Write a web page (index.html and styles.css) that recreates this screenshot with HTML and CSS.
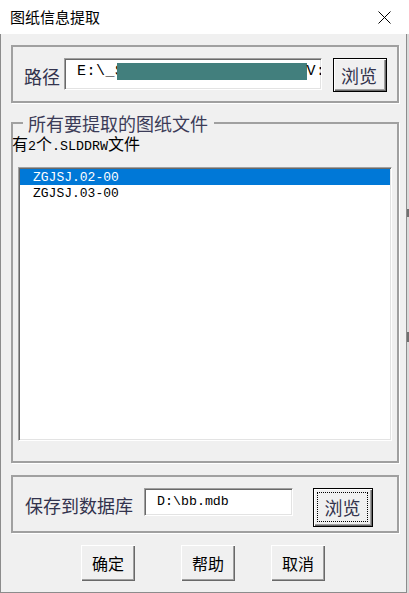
FILE: index.html
```html
<!DOCTYPE html>
<html>
<head>
<meta charset="utf-8">
<link rel="stylesheet" href="styles.css">
</head>
<body>
<div class="win">
  <div class="titlebar">
    <span class="title">图纸信息提取</span>
    <svg class="close" viewBox="0 0 13 13"><path d="M0.5 0.5 L12.5 12.5 M12.5 0.5 L0.5 12.5" stroke="#000" stroke-width="1" fill="none"/></svg>
  </div>
  <div class="client">
    <div class="frame frame-path">
      <span class="lbl lbl-path">路径</span>
      <div class="edit edit-path"><span>E:\_S</span><span class="redact"></span><span>V:</span></div>
      <button class="btn btn-default btn-browse1">浏览</button>
    </div>
    <fieldset class="group">
      <legend>所有要提取的图纸文件</legend>
      <div class="count">有<span class="lat">2</span>个<span class="lat">.SLDDRW</span>文件</div>
      <div class="listbox">
        <div class="item sel">ZGJSJ.02-00</div>
        <div class="item">ZGJSJ.03-00</div>
      </div>
    </fieldset>
    <div class="frame frame-save">
      <span class="lbl lbl-save">保存到数据库</span>
      <div class="edit edit-db">D:\bb.mdb</div>
      <button class="btn btn-default btn-browse2"><span class="focus">浏览</span></button>
    </div>
    <div class="actions">
      <button class="btn btn-act btn-ok">确定</button>
      <button class="btn btn-act btn-help">帮助</button>
      <button class="btn btn-act btn-cancel">取消</button>
    </div>
  </div>
  <span class="mark mark1"></span>
  <span class="mark mark2"></span>
</div>
</body>
</html>
```
FILE: styles.css
```css
body {
  margin: 0;
  background: #fff;
}
.win {
  width: 409px;
  height: 593px;
  background: #dadada;
  position: relative;
  overflow: hidden;
  font-family: "Noto Sans CJK SC", sans-serif;
}
.titlebar {
  height: 34px;
  background: #fff;
  display: flex;
  align-items: center;
  justify-content: space-between;
  padding: 0 18px 0 10px;
  box-sizing: border-box;
}
.title {
  font-size: 15px;
  line-height: 20px;
  color: #000;
}
.close {
  width: 13px;
  height: 13px;
  display: block;
}
.client {
  height: 559px;
  box-sizing: border-box;
  margin-right: 2px;
  background: #f0f0f0;
  border: 1px solid #8c8c8c;
  border-top: none;
  padding: 11px 7px 0 10px;
}
.frame {
  height: 58px;
  box-sizing: border-box;
  border: 2px solid #a0a0a0;
  box-shadow: 1px 1px 0 #fff;
  display: flex;
  align-items: flex-start;
  padding-top: 11px;
}
.frame-path {
  padding-left: 11px;
}
.frame-save {
  margin-top: 12px;
  padding-left: 12px;
}
.lbl {
  font-size: 18px;
  line-height: 20px;
  color: #33334d;
  margin-top: 8px;
  white-space: nowrap;
}
.lbl-path {
  margin-right: 4px;
}
.lbl-save {
  margin-right: 11px;
  margin-top: 7px;
}
.edit {
  background: #fff;
  box-sizing: border-box;
  border: 1px solid;
  border-color: #a0a0a0 #fff #fff #a0a0a0;
  box-shadow: inset 1px 1px #696969, inset -1px -1px #e3e3e3;
  font-family: "Liberation Mono", monospace;
  color: #000;
  white-space: nowrap;
  overflow: hidden;
}
.edit-path {
  width: 258px;
  height: 32px;
  padding: 4px 0 0 12px;
  font-size: 15px;
  letter-spacing: 0.5px;
  line-height: 17px;
}
.redact {
  display: inline-block;
  width: 190px;
  height: 17px;
  background: #427f7d;
  vertical-align: top;
  margin-left: -8px;
}
.edit-db {
  width: 149px;
  height: 28px;
  padding-left: 12px;
  font-size: 13.3px;
  line-height: 26px;
}
.btn {
  font-family: "Noto Sans CJK SC", sans-serif;
  background: #f0f0f0;
  padding: 0;
  margin: 0;
  box-sizing: border-box;
  cursor: default;
}
.btn-default {
  border: 1px solid #000;
  box-shadow: inset 1px 1px #fff, inset -1px -1px #696969, inset -2px -2px #a0a0a0;
  font-size: 18px;
  line-height: 20px;
  color: #33334d;
  display: flex;
  align-items: center;
  justify-content: center;
}
.btn-browse1 {
  width: 54px;
  height: 34px;
  margin-left: 11px;
  padding-right: 2px;
}
.btn-browse2 {
  width: 60px;
  height: 39px;
  margin-left: 20px;
  padding: 3px 4px 4px 3px;
}
.focus {
  display: flex;
  align-items: center;
  justify-content: center;
  width: 100%;
  height: 100%;
  border: 1px dotted #000;
  box-sizing: border-box;
}
.group {
  margin: 10px 0 0 0;
  padding: 0 5px 20px 5px;
  border: 2px solid #a0a0a0;
  box-shadow: 1px 1px 0 #fff;
  min-width: 0;
  width: 388px;
  box-sizing: border-box;
}
.group legend {
  font-size: 18px;
  line-height: 20px;
  color: #3c3c58;
  padding: 0 6px 0 5px;
  margin-left: 5px;
}
.count {
  font-size: 16px;
  line-height: 18px;
  color: #000;
  margin: 1px 0 0 -6px;
  white-space: nowrap;
}
.lat {
  font-family: "Liberation Mono", monospace;
  font-size: 13.3px;
}
.listbox {
  margin-top: 11px;
  height: 274px;
  background: #fff;
  box-sizing: border-box;
  border: 1px solid;
  border-color: #a0a0a0 #fff #fff #a0a0a0;
  box-shadow: inset 1px 1px #696969, inset -1px -1px #e3e3e3;
  padding: 1px;
}
.item {
  font-family: "Liberation Mono", monospace;
  font-size: 13px;
  line-height: 17px;
  height: 16px;
  padding-left: 13px;
  color: #000;
  overflow: hidden;
  white-space: nowrap;
}
.item.sel {
  background: #0078d7;
  color: #fff;
}
.actions {
  margin-top: 12px;
  display: flex;
  height: 36px;
}
.btn-act {
  width: 54px;
  height: 36px;
  border: none;
  box-shadow: inset 1px 1px #fff, inset -1px -1px #696969, inset -2px -2px #a0a0a0;
  font-size: 16px;
  line-height: 20px;
  color: #000;
}
.btn-ok {
  margin-left: 70px;
}
.btn-help {
  margin-left: 46px;
}
.btn-cancel {
  margin-left: 36px;
}
.mark {
  position: absolute;
  right: 0;
  width: 2px;
  background: #707070;
}
.mark1 {
  top: 209px;
  height: 8px;
}
.mark2 {
  top: 332px;
  height: 10px;
}
```
